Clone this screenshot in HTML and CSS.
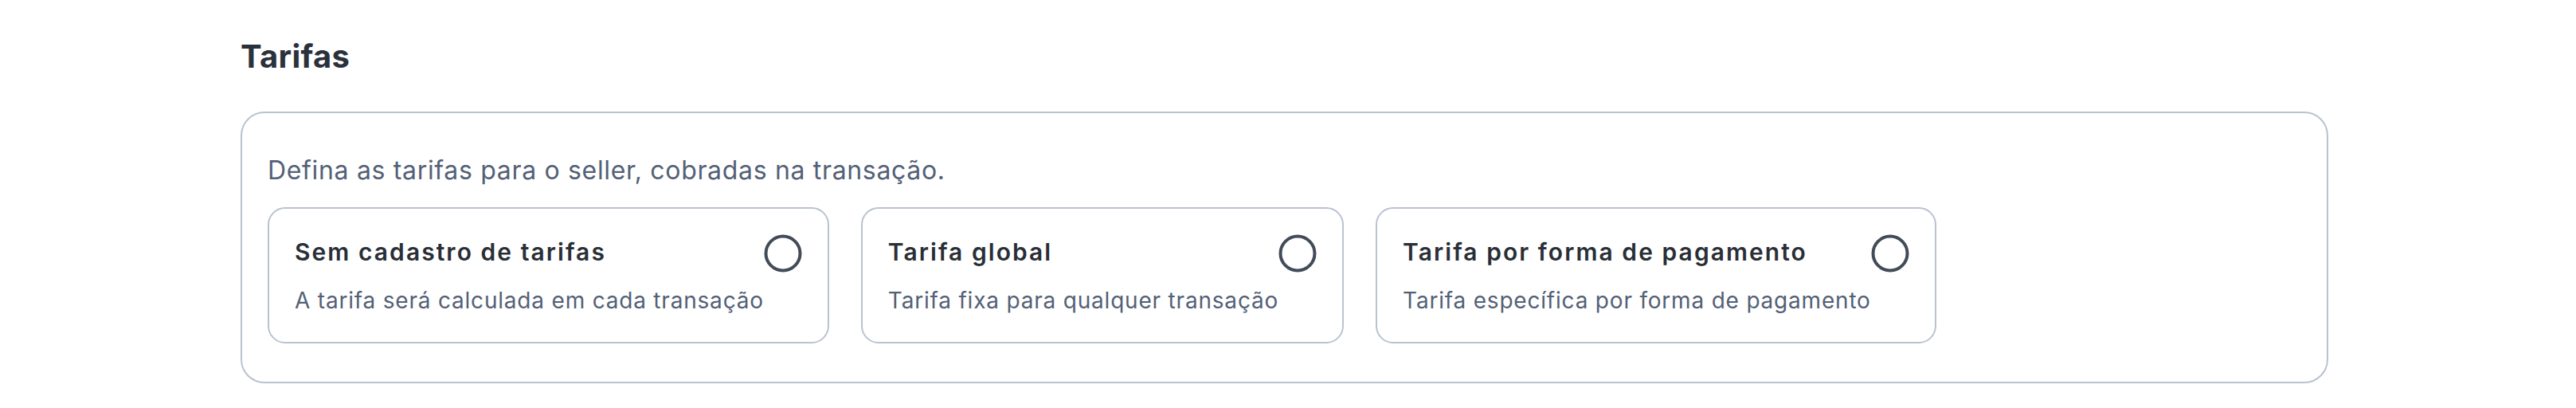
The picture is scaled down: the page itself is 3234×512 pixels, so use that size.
FILE: index.html
```html
<!DOCTYPE html>
<html lang="pt-BR">
<head>
<meta charset="utf-8">
<title>Tarifas</title>
<link rel="stylesheet" href="styles.css">
</head>
<body>
<main class="page">
  <h2 class="section-title">Tarifas</h2>
  <section class="panel">
    <p class="panel-desc">Defina as tarifas para o seller, cobradas na transação.</p>
    <div class="options">
      <label class="option">
        <div class="option-text">
          <span class="option-title">Sem cadastro de tarifas</span>
          <span class="option-sub">A tarifa será calculada em cada transação</span>
        </div>
        <svg class="radio" viewBox="0 0 48 48" width="48" height="48" aria-hidden="true"><circle cx="24" cy="24" r="21.5" fill="none" stroke="currentColor" stroke-width="4"/></svg>
      </label>
      <label class="option">
        <div class="option-text">
          <span class="option-title">Tarifa global</span>
          <span class="option-sub">Tarifa fixa para qualquer transação</span>
        </div>
        <svg class="radio" viewBox="0 0 48 48" width="48" height="48" aria-hidden="true"><circle cx="24" cy="24" r="21.5" fill="none" stroke="currentColor" stroke-width="4"/></svg>
      </label>
      <label class="option">
        <div class="option-text">
          <span class="option-title">Tarifa por forma de pagamento</span>
          <span class="option-sub">Tarifa específica por forma de pagamento</span>
        </div>
        <svg class="radio" viewBox="0 0 48 48" width="48" height="48" aria-hidden="true"><circle cx="24" cy="24" r="21.5" fill="none" stroke="currentColor" stroke-width="4"/></svg>
      </label>
    </div>
  </section>
</main>
</body>
</html>
```
FILE: styles.css
```css
* { box-sizing: border-box; }
html, body { margin: 0; padding: 0; background: #ffffff; }
body {
  font-family: Inter, "Open Sans", "Liberation Sans", sans-serif;
  color: #2a3039;
}
.page {
  padding: 47px 0 0 302px;
  width: 2923px;
}
.section-title {
  margin: 0 0 45px 0;
  font-size: 40px;
  line-height: 48px;
  font-weight: 700;
  letter-spacing: 0.3px;
  color: #2b313b;
}
.panel {
  border: 2px solid #b9c2cf;
  border-radius: 30px;
  padding: 52px 32px 48px 32px;
}
.panel-desc {
  margin: 0 0 26px 0;
  font-size: 32px;
  line-height: 40px;
  font-weight: 400;
  letter-spacing: 0.67px;
  color: #536076;
}
.options {
  display: flex;
  gap: 40px;
  align-items: flex-start;
}
.option {
  display: flex;
  align-items: flex-start;
  border: 2px solid #b9c2cf;
  border-radius: 22px;
  padding: 32px;
  cursor: pointer;
}
.option-text {
  display: flex;
  flex-direction: column;
}
.option-title {
  font-size: 30px;
  line-height: 44px;
  font-weight: 600;
  letter-spacing: 2.05px;
  white-space: nowrap;
  color: #2a2f37;
}
.option-sub {
  margin-top: 19px;
  font-size: 28px;
  line-height: 40px;
  font-weight: 400;
  letter-spacing: 0.8px;
  white-space: nowrap;
  color: #536076;
}
.radio {
  flex: none;
  display: block;
  color: #424b58;
}
```
